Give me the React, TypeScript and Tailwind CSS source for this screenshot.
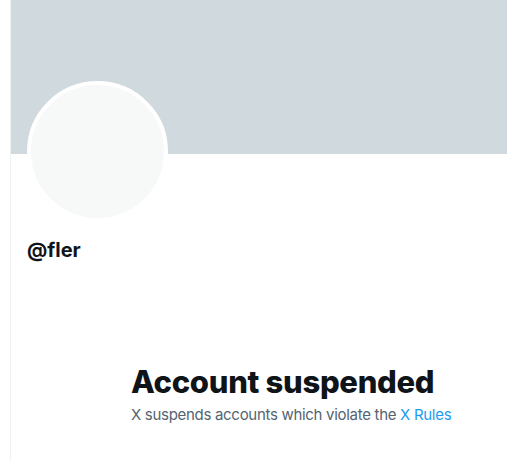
export default function App() {
  return (
    <div className="h-screen overflow-hidden bg-white font-['Inter',sans-serif]">
      <div className="ml-[10px] w-[600px] min-h-screen border-l border-[#eff3f4]">
        <div className="h-[154px] bg-[#cfd9de]" />
        <div className="px-4">
          <div className="-mt-[73px] h-[141px] w-[141px] rounded-full border-4 border-white bg-[#f7f9f9]" />
          <div className="mt-[16px] text-[20px] font-bold leading-6 text-[#0f1419]">@fler</div>
        </div>
        <div className="mt-[102px] pl-[120px]">
          <h1 className="text-[31px] font-extrabold leading-9 tracking-[-0.3px] text-[#0f1419]">
            Account suspended
          </h1>
          <p className="mt-[5px] text-[15px] leading-5 tracking-[-0.3px] text-[#536471]">
            X suspends accounts which violate the{" "}
            <a className="text-[#1d9bf0]">X Rules</a>
          </p>
        </div>
      </div>
    </div>
  );
}
